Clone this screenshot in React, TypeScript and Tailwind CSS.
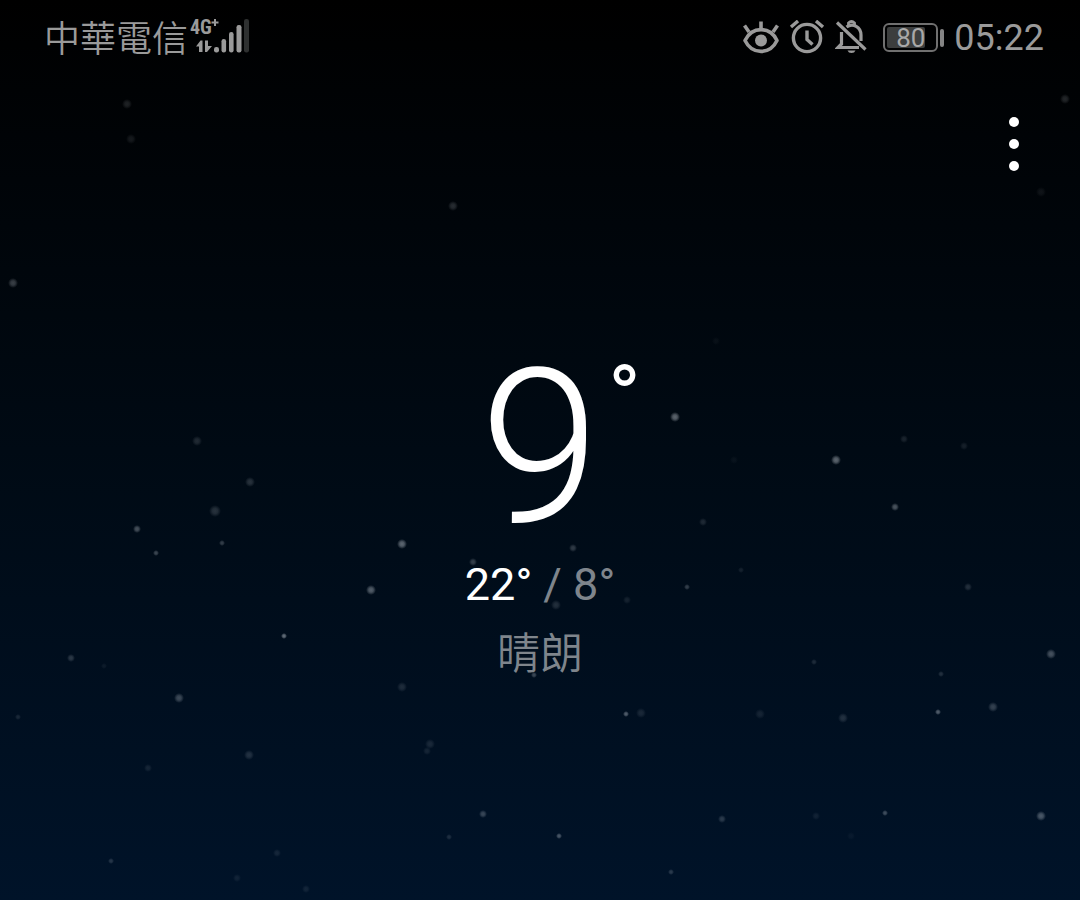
type Star = [x: number, y: number, r: number, alpha: number];

const STARS: Star[] = [
  [127, 104, 4, 0.14], [131, 139, 4, 0.1], [453, 206, 4, 0.18], [13, 283, 4, 0.26],
  [1065, 99, 4, 0.16], [1041, 192, 4, 0.07], [716, 341, 3, 0.04], [675, 417, 4, 0.42],
  [836, 460, 4, 0.42], [904, 439, 3, 0.12], [964, 446, 3, 0.1], [734, 460, 3, 0.04],
  [895, 507, 3, 0.34], [703, 522, 3, 0.14], [197, 441, 4, 0.15], [250, 482, 4, 0.18],
  [215, 511, 5, 0.18], [137, 529, 3, 0.32], [222, 543, 2, 0.24], [156, 553, 2, 0.28],
  [402, 544, 4, 0.42], [371, 590, 4, 0.38], [284, 636, 2, 0.46], [573, 548, 3, 0.22],
  [473, 562, 3, 0.24], [556, 605, 4, 0.16], [627, 600, 3, 0.1], [687, 587, 2, 0.24],
  [741, 570, 2, 0.1], [968, 587, 3, 0.16], [71, 658, 3, 0.2], [104, 666, 2, 0.06],
  [179, 698, 4, 0.28], [18, 717, 2, 0.12], [402, 687, 4, 0.14], [534, 675, 2, 0.28],
  [626, 714, 2, 0.38], [641, 713, 4, 0.12], [760, 714, 4, 0.1], [814, 662, 2, 0.14],
  [843, 718, 4, 0.16], [941, 674, 2, 0.16], [938, 712, 2, 0.38], [993, 707, 4, 0.24],
  [1051, 654, 4, 0.32], [430, 744, 4, 0.12], [427, 751, 3, 0.1], [249, 755, 4, 0.16],
  [148, 768, 3, 0.1], [483, 814, 3, 0.26], [449, 837, 2, 0.14], [559, 836, 2, 0.34],
  [722, 819, 3, 0.2], [816, 816, 3, 0.08], [885, 813, 2, 0.3], [1041, 816, 4, 0.34],
  [671, 872, 2, 0.2], [111, 861, 2, 0.18], [277, 853, 3, 0.1], [237, 878, 3, 0.08],
  [306, 889, 3, 0.09], [851, 836, 3, 0.04],
];

function NightSky() {
  return (
    <svg
      aria-hidden="true"
      viewBox="0 0 1080 900"
      preserveAspectRatio="xMidYMin slice"
      className="absolute inset-0 h-full w-full"
    >
      <defs>
        <radialGradient id="star">
          <stop offset="0" stopColor="#dfe6ee" />
          <stop offset="0.45" stopColor="#dfe6ee" stopOpacity="0.8" />
          <stop offset="1" stopColor="#dfe6ee" stopOpacity="0" />
        </radialGradient>
      </defs>
      {STARS.map(([x, y, r, alpha]) => (
        <circle key={`${x}-${y}`} cx={x} cy={y} r={r + 1} fill="url(#star)" opacity={alpha} />
      ))}
    </svg>
  );
}

function NetworkStatus() {
  return (
    <svg role="img" aria-label="4G+ signal" viewBox="0 0 60 38" className="h-[38px] w-[60px] overflow-visible">
      <text
        x="0"
        y="15"
        fill="#9a9a9a"
        fontSize="20"
        fontWeight="700"
        fontFamily="'Liberation Sans Narrow', 'Roboto Condensed', Roboto, sans-serif"
      >
        4G
      </text>
      <path d="M25 0v7M21.500 3.500h7" stroke="#9a9a9a" strokeWidth="2" />
      <g fill="#9a9a9a">
        <path d="M6 27.500 10.500 21.500H12.500V33H9V27.500ZM15 21.500H18V27H22L17 33H15Z" />
        <rect x="24" y="28" width="5" height="5.500" rx="2.200" />
        <rect x="31.500" y="20" width="4.600" height="13.500" rx="2.200" />
        <rect x="39" y="13" width="4.600" height="20.500" rx="2.200" />
        <rect x="46.500" y="6" width="5" height="27.500" rx="2.200" />
      </g>
      <rect x="54" y="0" width="5" height="33.500" rx="2.200" fill="#2e3030" />
    </svg>
  );
}

function EyeIcon() {
  return (
    <svg aria-hidden="true" viewBox="0 0 36 36" className="h-9 w-9" fill="none" stroke="#9a9a9a">
      <path d="M2 20.500C9 6 27 6 34 20.500C27 35 9 35 2 20.500Z" strokeWidth="3.600" strokeLinejoin="round" />
      <circle cx="18" cy="20.500" r="6" fill="#9a9a9a" stroke="none" />
      <path d="M18 1.500V9M1.500 5.500 6 12M34.500 5.500 30 12" strokeWidth="3.600" />
    </svg>
  );
}

function AlarmIcon() {
  return (
    <svg aria-hidden="true" viewBox="0 0 36 36" className="h-9 w-9" fill="none" stroke="#9a9a9a" strokeWidth="3.400">
      <circle cx="18" cy="18" r="13.600" />
      <path d="M18 10.500V19.500L23.500 24.500" />
      <path d="M2 7 9 1M34 7 27 1" />
    </svg>
  );
}

function MutedBellIcon() {
  return (
    <svg aria-hidden="true" viewBox="0 0 32 36" className="h-9 w-8" fill="none" stroke="#9a9a9a" strokeWidth="3.200">
      <path d="M6.500 12V24L3 27.500H24" />
      <path d="M11.500 7C18 2.500 26 7 26 15V21" />
      <path d="M13.500 5V3Q16.500 0 19.500 3V5" strokeWidth="2.800" />
      <path d="M2 2.500 30.500 29.500" />
      <path d="M12.500 30.500H20.500Q19.500 33 16.500 33T12.500 30.500Z" fill="#9a9a9a" stroke="none" />
    </svg>
  );
}

function Battery({ level }: { level: number }) {
  return (
    <div className="flex items-center gap-0.5" role="img" aria-label={`Battery ${level}%`}>
      <div className="relative h-[29px] w-[55px] rounded-md border-2 border-[#707070] p-0.5">
        <div className="h-full rounded-xs bg-[#3c3e3e]" style={{ width: `${level}%` }} />
        <span className="absolute inset-0 flex items-center justify-center text-[26px] leading-none text-[#a8a8a8]">
          {level}
        </span>
      </div>
      <div className="h-[18px] w-1 rounded-sm bg-[#858585]" />
    </div>
  );
}

function StatusBar() {
  return (
    <header className="flex h-[75px] items-center justify-between pl-11 pr-9 text-[#9a9a9a]">
      <div className="flex items-center gap-0.5">
        <span className="pt-1 text-[36px] font-[350] leading-none">中華電信</span>
        <NetworkStatus />
      </div>
      <div className="flex items-center gap-2.5">
        <EyeIcon />
        <AlarmIcon />
        <MutedBellIcon />
        <div className="ml-1.5">
          <Battery level={80} />
        </div>
        <time className="text-[36px] leading-none">05:22</time>
      </div>
    </header>
  );
}

export default function App() {
  return (
    <div className="relative min-h-screen overflow-hidden bg-linear-to-b/srgb from-black via-[#000a14] to-[#001329] font-['Roboto','Noto_Sans_CJK_TC',sans-serif]">
      <NightSky />
      <div className="relative">
        <StatusBar />
        <div className="flex justify-end px-11 pt-8">
          <button type="button" aria-label="More options" className="flex w-11 flex-col items-center gap-3 py-2.5">
            <span className="size-2.5 rounded-full bg-white" />
            <span className="size-2.5 rounded-full bg-white" />
            <span className="size-2.5 rounded-full bg-white" />
          </button>
        </div>
        <main className="flex flex-col items-center pt-40 text-white">
          <h1 className="relative text-[216px] font-light leading-none">
            9
            <span className="absolute left-full top-3 pl-2 text-[88px] font-normal leading-none">°</span>
          </h1>
          <p className="text-[45px] leading-[56px]">
            22° <span className="text-[#7f858c]">/ 8°</span>
          </p>
          <p className="pt-2 text-[43px] font-[350] leading-[66px] text-[#7f858c]">晴朗</p>
        </main>
      </div>
    </div>
  );
}
